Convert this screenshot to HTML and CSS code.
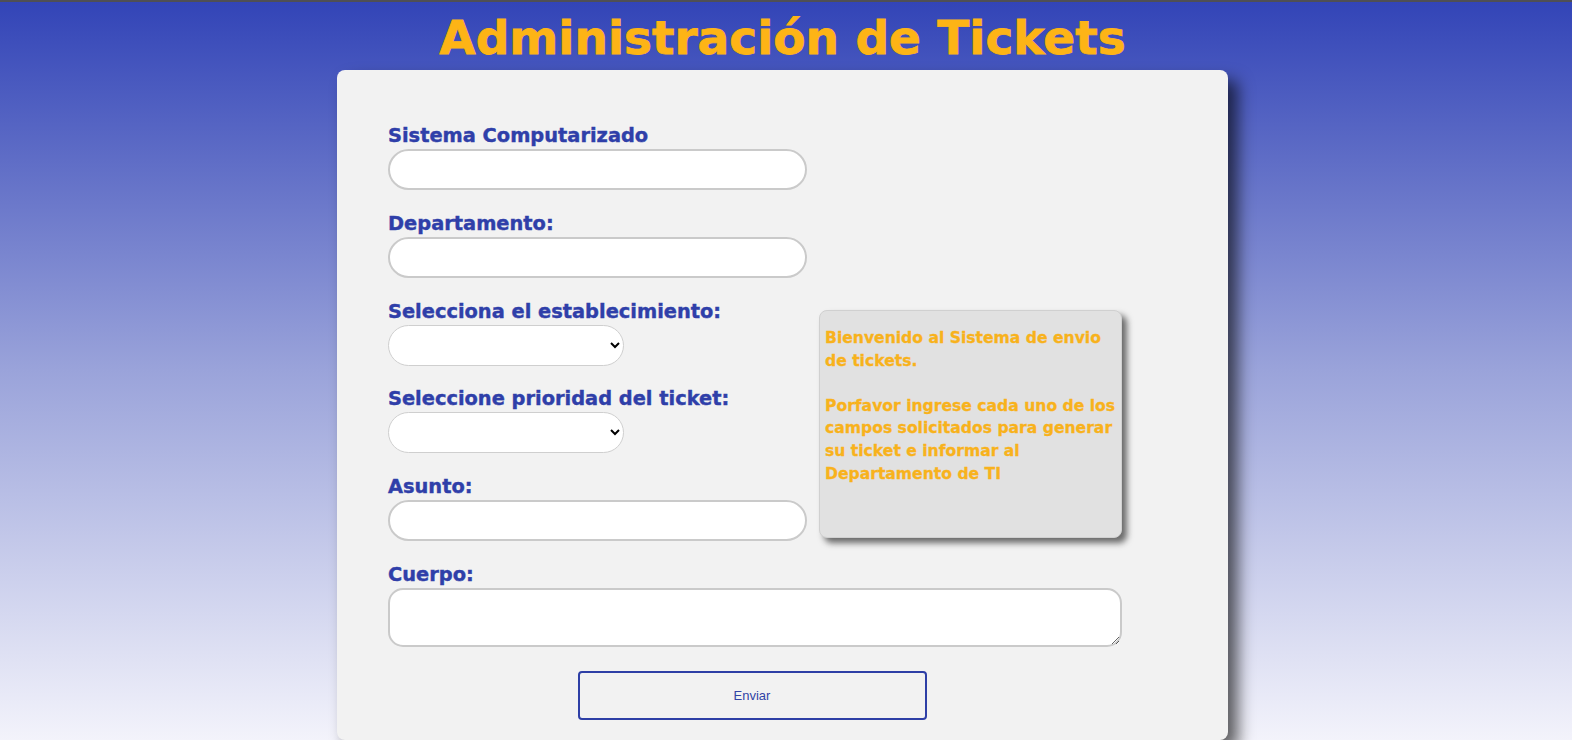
FILE: index.html
```html
<!DOCTYPE html>
<html lang="es">
<head>
<meta charset="utf-8">
<title>Administración de Tickets</title>
<link rel="stylesheet" href="styles.css">
</head>
<body>
<div class="page">
  <h1 class="title">Administración de Tickets</h1>
  <main class="card">
    <form class="form">
      <div class="top-grid">
        <div class="fields">
          <div class="field">
            <label class="label" for="sistema">Sistema Computarizado</label>
            <input class="input" id="sistema" type="text">
          </div>
          <div class="field">
            <label class="label" for="depto">Departamento:</label>
            <input class="input" id="depto" type="text">
          </div>
          <div class="field">
            <label class="label" for="estab">Selecciona el establecimiento:</label>
            <select class="select" id="estab"><option></option></select>
          </div>
          <div class="field">
            <label class="label" for="prio">Seleccione prioridad del ticket:</label>
            <select class="select" id="prio"><option></option></select>
          </div>
          <div class="field">
            <label class="label" for="asunto">Asunto:</label>
            <input class="input" id="asunto" type="text">
          </div>
        </div>
        <aside class="info">
          <p class="info-text">Bienvenido al Sistema de envio<br>de tickets.<br><br>Porfavor ingrese cada uno de los<br>campos solicitados para generar<br>su ticket e informar al<br>Departamento de TI</p>
        </aside>
      </div>
      <div class="field field-wide">
        <label class="label" for="cuerpo">Cuerpo:</label>
        <textarea class="textarea" id="cuerpo"></textarea>
      </div>
      <div class="actions">
        <button class="button" type="button">Enviar</button>
      </div>
    </form>
  </main>
</div>
</body>
</html>
```

FILE: styles.css
```css
* { box-sizing: border-box; }

html, body { height: 100%; }

body {
  margin: 0;
  border-top: 2px solid #4f4f55;
  background: linear-gradient(to bottom, #3244b7 0%, #9aa3da 50%, #f3f3fb 100%) fixed;
  font-family: "Liberation Sans", Arial, sans-serif;
  overflow: hidden;
}

.page {
  width: 891px;
  margin-left: calc(50% - 449px);
}

.title {
  margin: 8px 0 4px;
  font-family: "DejaVu Sans", sans-serif;
  font-weight: bold;
  font-size: 47px;
  line-height: 56px;
  color: #fdb416;
  -webkit-text-stroke: 0.8px #fdb416;
  text-align: center;
  white-space: nowrap;
}

.card {
  height: 670px;
  background: #f2f2f2;
  border-radius: 8px;
  box-shadow: 10px 10px 16px rgba(0, 0, 0, 0.62);
  padding: 52px 0 0 51px;
}

.form {
  width: 734px;
}

.top-grid {
  display: grid;
  grid-template-columns: 419px 303px;
  column-gap: 12px;
}

.field {
  display: flex;
  flex-direction: column;
  align-items: flex-start;
  margin-bottom: 19.8px;
}

.label {
  font-family: "DejaVu Sans", sans-serif;
  font-weight: bold;
  font-size: 19.4px;
  line-height: 27px;
  color: #2f3fa9;
  -webkit-text-stroke: 0.4px #2f3fa9;
  white-space: nowrap;
}

.input {
  width: 419px;
  height: 41px;
  border: 2px solid #cacaca;
  border-radius: 21px;
  background: #fff;
  padding: 0 14px;
  font-size: 14px;
  outline: none;
}

.select {
  width: 236px;
  height: 41px;
  border: 1px solid #cfcfcf;
  border-radius: 21px;
  background: #fff;
  padding: 0 8px 0 12px;
  font-size: 14px;
  color: #000;
}

.info {
  margin-top: 188px;
  height: 228px;
  background: #e1e1e1;
  border: 1px solid #d0d0d0;
  border-radius: 8px;
  box-shadow: 5px 5px 6px #6a6a6a;
  padding: 16px 5px 0;
}

.info-text {
  margin: 0;
  font-family: "DejaVu Sans", sans-serif;
  font-weight: bold;
  font-size: 15.6px;
  line-height: 22.6px;
  color: #f8b21c;
  -webkit-text-stroke: 0.3px #f8b21c;
  white-space: nowrap;
}

.field-wide { margin-bottom: 24px; }

.textarea {
  width: 734px;
  height: 59px;
  border: 2px solid #cacaca;
  border-radius: 15px;
  background: #fff;
  padding: 8px 14px;
  font-size: 14px;
  outline: none;
}

.actions {
  display: flex;
  justify-content: center;
  padding-right: 6px;
}

.button {
  width: 349px;
  height: 49px;
  border: 2px solid #2e3fa6;
  border-radius: 4px;
  background: #f2f2f2;
  color: #3344a6;
  font-family: "Liberation Sans", Arial, sans-serif;
  font-size: 13px;
}
```
